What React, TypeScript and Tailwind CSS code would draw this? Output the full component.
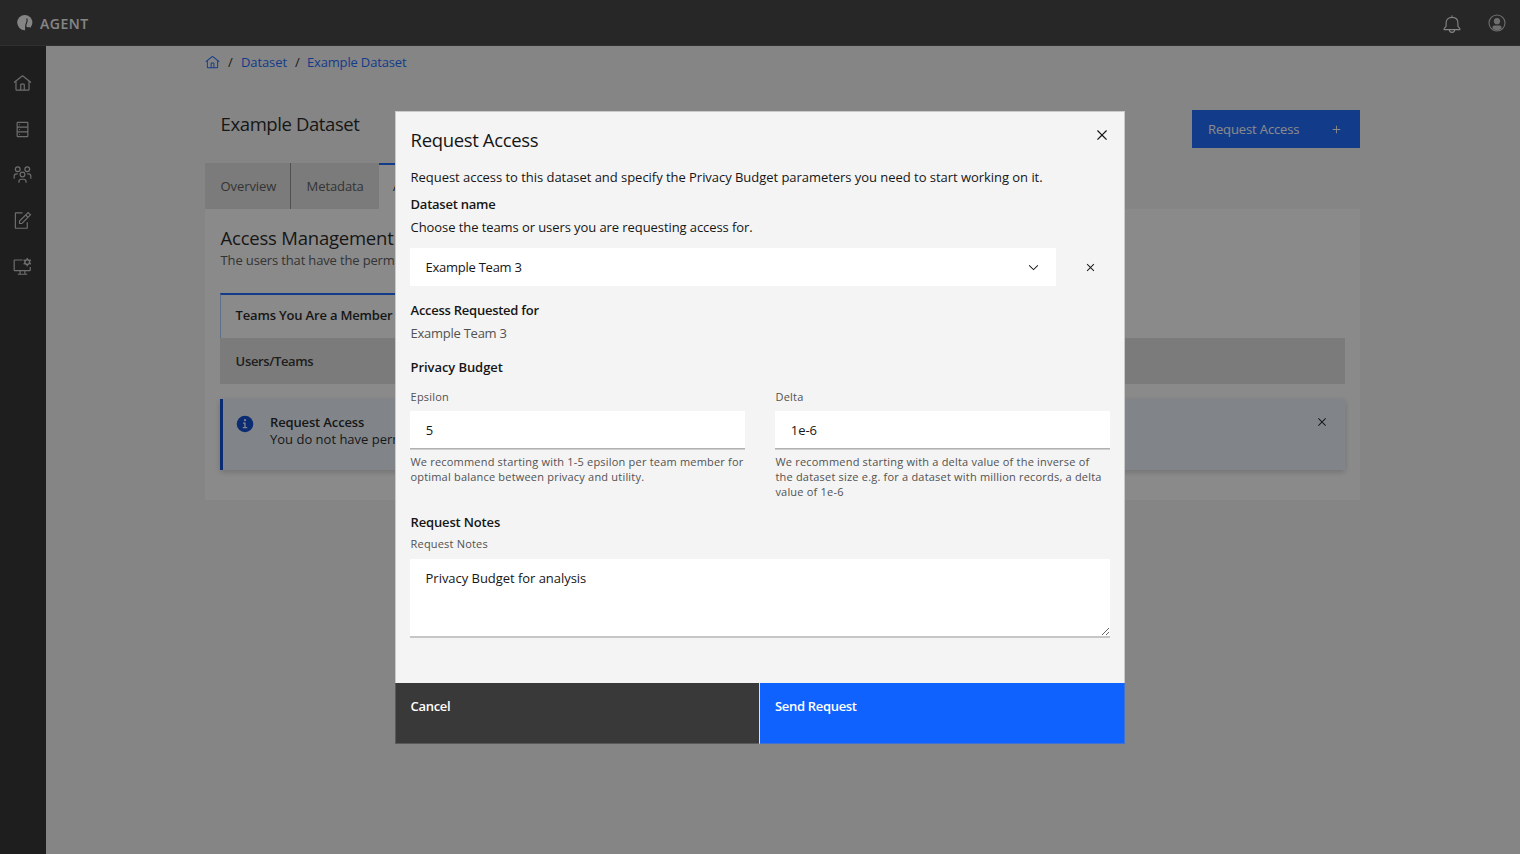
import React from "react";

type IconProps = { d: string; className: string; box?: number; children?: React.ReactNode };

function Icon({ d, className, box = 32, children }: IconProps) {
  return (
    <svg viewBox={`0 0 ${box} ${box}`} className={`shrink-0 ${className}`} fill="currentColor">
      <path d={d} />
      {children}
    </svg>
  );
}

const HOME =
  "M16.6123,2.2138a1.01,1.01,0,0,0-1.2427,0L1,13.4194l1.2427,1.5717L4,13.6208V26a2.0041,2.0041,0,0,0,2,2H26a2.0037,2.0037,0,0,0,2-2V13.63L29.7573,15,31,13.4282ZM18,26H14V18h4Zm2,0V18a2.0023,2.0023,0,0,0-2-2H14a2.002,2.002,0,0,0-2,2v8H6V12.0615l10-7.79,10,7.8005V26Z";
const CLOSE = "M24 9.4L22.6 8 16 14.6 9.4 8 8 9.4 14.6 16 8 22.6 9.4 24 16 17.4 22.6 24 24 22.6 17.4 16z";
const ADD = "M17 15V8H15V15H8V17H15V24H17V17H24V15Z";
const CHEVRON = "M8 11L3 6 3.7 5.3 8 9.6 12.3 5.3 13 6z";
const DATA =
  "M24,3H8A2,2,0,0,0,6,5V27a2,2,0,0,0,2,2H24a2,2,0,0,0,2-2V5A2,2,0,0,0,24,3Zm0,2v6H8V5ZM8,19V13H24v6Zm0,8V21H24v6Z";
const EVENTS =
  "M26,14H24v2h2a3.0033,3.0033,0,0,1,3,3v4h2V19A5.0058,5.0058,0,0,0,26,14ZM24,4a3,3,0,1,1-3,3,3,3,0,0,1,3-3m0-2a5,5,0,1,0,5,5A5,5,0,0,0,24,2ZM23,30H21V28a3.0033,3.0033,0,0,0-3-3H14a3.0033,3.0033,0,0,0-3,3v2H9V28a5.0059,5.0059,0,0,1,5-5h4a5.0059,5.0059,0,0,1,5,5ZM16,13a3,3,0,1,1-3,3,3,3,0,0,1,3-3m0-2a5,5,0,1,0,5,5A5,5,0,0,0,16,11ZM8,14H6a5.0059,5.0059,0,0,0-5,5v4H3V19a3.0033,3.0033,0,0,1,3-3H8ZM8,4A3,3,0,1,1,5,7,3,3,0,0,1,8,4M8,2a5,5,0,1,0,5,5A5,5,0,0,0,8,2Z";

function Logo() {
  return (
    <svg viewBox="0 0 16 16" className="size-4 shrink-0" fill="none">
      <circle cx="7.8" cy="7.6" r="7.6" fill="#f4f4f4" />
      <path d="M9.8 3.6C10.6 5.4 10.2 7 9.2 8.8 8.6 10 8.6 12 8.7 15.5" stroke="#393939" strokeWidth="1.2" />
      <path d="M8.7 11.2C9.8 12.4 11 12.6 12.4 12L13.6 13.8 10.6 16H8.7Z" fill="#393939" />
    </svg>
  );
}

function Sidebar() {
  return (
    <nav className="flex w-[46px] shrink-0 flex-col items-center gap-[26.6px] bg-[#262626] pt-[28px] pr-px text-[#c6c6c6]">
      <Icon d={HOME} className="size-[19px]" />
      <Icon d={DATA} className="size-[19px]">
        <circle cx="11" cy="8" r="1" />
        <circle cx="11" cy="16" r="1" />
        <circle cx="11" cy="24" r="1" />
      </Icon>
      <Icon d={EVENTS} className="size-[19px]" />
      <svg viewBox="0 0 32 32" className="size-[19px] shrink-0" fill="none" stroke="currentColor" strokeWidth="2">
        <path d="M16 3H5a1 1 0 0 0-1 1V28a1 1 0 0 0 1 1H23a1 1 0 0 0 1-1V19" />
        <path d="M11 21V17L25.5 2.7 29.4 6.5 15 21ZM21.5 6.8 25.3 10.6" />
      </svg>
      <svg viewBox="0 0 32 32" className="mt-[0.6px] size-[19px] shrink-0" fill="none" stroke="currentColor" strokeWidth="2">
        <path d="M16 5H3a1 1 0 0 0-1 1V22a1 1 0 0 0 1 1H28a1 1 0 0 0 1-1V17M12 23V29M20 23V29M8 29H24" />
        <circle cx="24" cy="8.5" r="4" strokeWidth="2.4" />
        <path d="M24 1.5V4.5M24 12.5V15.5M17.9 5 20.5 6.5M27.5 10.5 30.1 12M17.9 12 20.5 10.5M27.5 6.5 30.1 5" strokeWidth="2.4" />
      </svg>
    </nav>
  );
}

function Header() {
  return (
    <header className="flex h-[46px] shrink-0 items-center border-b border-[#4a4a4a] bg-[#393939] pl-[17px] text-[#f4f4f4]">
      <Logo />
      <span className="ml-[7px] pt-px text-[14px] font-semibold tracking-[0.5px]">AGENT</span>
      <svg viewBox="0 0 18 18" className="ml-auto mt-[3px] size-[18px]" fill="none" stroke="currentColor" strokeWidth="1.1">
        <path d="M9 .6V2.4M1.2 14.6V13.4L3.1 11.4V8C3.1 4.6 5.4 2.4 9 2.4S14.9 4.6 14.9 8V11.4L16.8 13.4V14.6ZM6.3 14.8C6.3 18.2 11.7 18.2 11.7 14.8" />
      </svg>
      <svg viewBox="0 0 18 18" className="ml-[27.5px] mr-[14px] size-[18px] text-[#c6c6c6]" fill="none" stroke="currentColor">
        <circle cx="9" cy="9" r="8" strokeWidth="1.1" />
        <circle cx="9" cy="7.2" r="3.1" fill="currentColor" stroke="none" />
        <path d="M4.5 14.6V13.4C4.5 12 5.6 11.5 6.6 11.5H11.4C12.4 11.5 13.5 12 13.5 13.4V14.6C11 17 7 17 4.5 14.6Z" fill="currentColor" stroke="none" />
      </svg>
    </header>
  );
}

function DatasetPage() {
  return (
    <main className="flex-1 pl-[159px] pr-[160px]">
      <div className="flex h-[34px] items-center text-[#0f62fe]">
        <Icon d={HOME} className="mb-[2px] size-[15px]" />
        <span className="ml-[8px] w-[13px] text-[#161616]">/</span>
        <span className="tracking-[-0.1px]">Dataset</span>
        <span className="ml-[8px] w-[12px] text-[#161616]">/</span>
        <span className="tracking-[-0.16px]">Example Dataset</span>
      </div>
      <div className="mt-[30px] flex h-[38px] items-start justify-between">
        <h1 className="pl-[15.6px] text-[18.5px] leading-[28px] tracking-[-0.4px] text-[#161616]">Example Dataset</h1>
        <button className="flex h-[38px] w-[168px] items-center justify-between bg-[#0f62fe] pl-[16px] pr-[16px] tracking-[-0.12px] text-white">
          <span className="pt-[2px]">Request Access</span>
          <Icon d={ADD} className="size-[15px]" />
        </button>
      </div>
      <div className="mt-[15px] flex h-[46px] text-[#525252]">
        <div className="w-[85px] bg-[#e0e0e0] pl-[15.6px] leading-[46px] tracking-[-0.1px]">Overview</div>
        <div className="w-[89px] border-l border-[#8d8d8d] bg-[#e0e0e0] pl-[15.6px] leading-[46px] tracking-[-0.1px]">Metadata</div>
        <div className="w-[150px] border-t-2 border-[#0f62fe] bg-white pl-[14px] leading-[42px] text-[#161616]">Access</div>
      </div>
      <section className="h-[291px] bg-white px-[15px] pt-[16px]">
        <h2 className="pl-[0.6px] text-[18.5px] leading-[26px] tracking-[-0.22px] text-[#161616]">Access Management</h2>
        <p className="pl-[0.6px] leading-[18px] tracking-[-0.15px] text-[#525252]">The users that have the permission</p>
        <div className="mt-[24px] h-[45px] w-[260px] whitespace-nowrap border-l border-t-2 border-l-[#a6c8ff] border-t-[#0f62fe] pl-[14.6px] font-semibold leading-[41px] tracking-[-0.18px] text-[#161616]">
          Teams You Are a Member Of
        </div>
        <div className="h-[46px] bg-[#e0e0e0] pl-[15.6px] font-semibold leading-[46px] tracking-[-0.35px] text-[#262626]">Users/Teams</div>
        <div className="mt-[15px] flex h-[71px] border-l-[3px] border-[#0043ce] bg-[#edf5ff] pl-[13px] pr-[15px] pt-[15px] text-[#161616] shadow-[0_2px_6px_rgba(0,0,0,0.2)]">
          <svg viewBox="0 0 18 18" className="mt-px size-[18px]">
            <circle cx="9" cy="9" r="8.3" fill="#0043ce" />
            <circle cx="9" cy="5.2" r="1.1" fill="#edf5ff" />
            <path d="M7 7.6H9.6V12H11.2V13.2H6.8V12H8.3V8.8H7Z" fill="#edf5ff" />
          </svg>
          <div className="ml-[16px] leading-[17px]">
            <p className="font-semibold tracking-[-0.14px]">Request Access</p>
            <p>You do not have permission</p>
          </div>
          <Icon d={CLOSE} className="ml-auto size-[16px]" />
        </div>
      </section>
    </main>
  );
}

function Field({ label, value, help }: { label: string; value: string; help: string }) {
  return (
    <div className="w-[335px]">
      <p className="pl-[0.6px] text-[11px] leading-[15px] tracking-[0.18px] text-[#525252]">{label}</p>
      <div className="mt-[7px] h-[38px] border-b border-[#b0b0b0] bg-white pl-[15.8px] leading-[38px] shadow-[0_1px_0_#cfcfcf]">{value}</div>
      <p className="mt-[5px] w-[345px] pl-[0.4px] text-[11px] leading-[15px] tracking-[0.2px] text-[#525252] whitespace-pre-line">{help}</p>
    </div>
  );
}

function RequestAccessModal() {
  return (
    <div className="fixed inset-0 flex justify-center bg-[rgba(22,22,22,0.5)] pt-[111px]">
      <div role="dialog" className="flex h-[633px] w-[730px] flex-col bg-[#f4f4f4] text-[#161616] outline outline-1 -outline-offset-1 outline-[rgba(141,141,141,0.4)]">
        <div className="flex-1 px-[15px] tracking-[-0.04px]">
          <div className="flex items-start justify-between">
            <h2 className="pl-[0.6px] pt-[15px] text-[18.5px] leading-[28px] tracking-[-0.35px]">Request Access</h2>
            <Icon d={CLOSE} className="mt-[14px] -mr-[2px] size-[20px]" />
          </div>
          <p className="mt-[13px] pl-[0.6px] leading-[20px]">
            Request access to this dataset and specify the Privacy Budget parameters you need to start working on it.
          </p>
          <p className="mt-[7px] pl-[0.6px] font-semibold leading-[20px] tracking-[-0.25px]">Dataset name</p>
          <p className="mt-[3px] pl-[0.6px] leading-[20px] tracking-[-0.08px]">Choose the teams or users you are requesting access for.</p>
          <div className="mt-[11px] flex items-center">
            <div className="flex h-[38px] w-[646px] items-center justify-between bg-white pl-[15.6px] pr-[15px]">
              <span className="pt-[2px] tracking-[-0.26px]">Example Team 3</span>
              <Icon d={CHEVRON} box={16} className="size-[15px] text-[#161616]" />
            </div>
            <Icon d={CLOSE} className="ml-[27px] mt-px size-[15px]" />
          </div>
          <p className="mt-[14px] pl-[0.6px] font-semibold leading-[20px] tracking-[-0.26px]">Access Requested for</p>
          <p className="mt-[3px] pl-[0.6px] leading-[20px] tracking-[-0.26px] text-[#525252]">Example Team 3</p>
          <p className="mt-[14px] pl-[0.6px] font-semibold leading-[20px] tracking-[-0.08px]">Privacy Budget</p>
          <div className="mt-[12px] flex h-[111px] gap-[30px]">
            <Field label="Epsilon" value="5" help={"We recommend starting with 1-5 epsilon per team member for\noptimal balance between privacy and utility."} />
            <Field label="Delta" value="1e-6" help={"We recommend starting with a delta value of the inverse of\nthe dataset size e.g. for a dataset with million records, a delta\nvalue of 1e-6"} />
          </div>
          <p className="mt-[12px] pl-[0.6px] font-semibold leading-[20px] tracking-[-0.16px]">Request Notes</p>
          <p className="mt-[4px] pl-[0.6px] text-[11px] leading-[15px] tracking-[0.18px] text-[#525252]">Request Notes</p>
          <textarea
            className="mt-[8px] block h-[79px] w-[700px] resize-y border-b-2 border-[#c6c6c6] bg-white px-[15.6px] pb-[10px] pt-[9px] leading-[20px] outline-none"
            defaultValue="Privacy Budget for analysis"
          />
        </div>
        <div className="flex h-[61px] font-semibold tracking-[-0.32px] text-white">
          <button className="flex w-[365px] items-start border-r border-[#e0e0e0] bg-[#393939] pl-[15.6px] pt-[13px] leading-[20px]">Cancel</button>
          <button className="flex flex-1 items-start bg-[#0f62fe] pl-[15px] pt-[13px] leading-[20px]">Send Request</button>
        </div>
      </div>
    </div>
  );
}

export default function App() {
  return (
    <div className="flex h-[854px] flex-col overflow-hidden bg-[#f4f4f4] font-['Open_Sans','Noto_Sans',sans-serif] text-[13px]">
      <Header />
      <div className="flex flex-1">
        <Sidebar />
        <DatasetPage />
      </div>
      <RequestAccessModal />
    </div>
  );
}
